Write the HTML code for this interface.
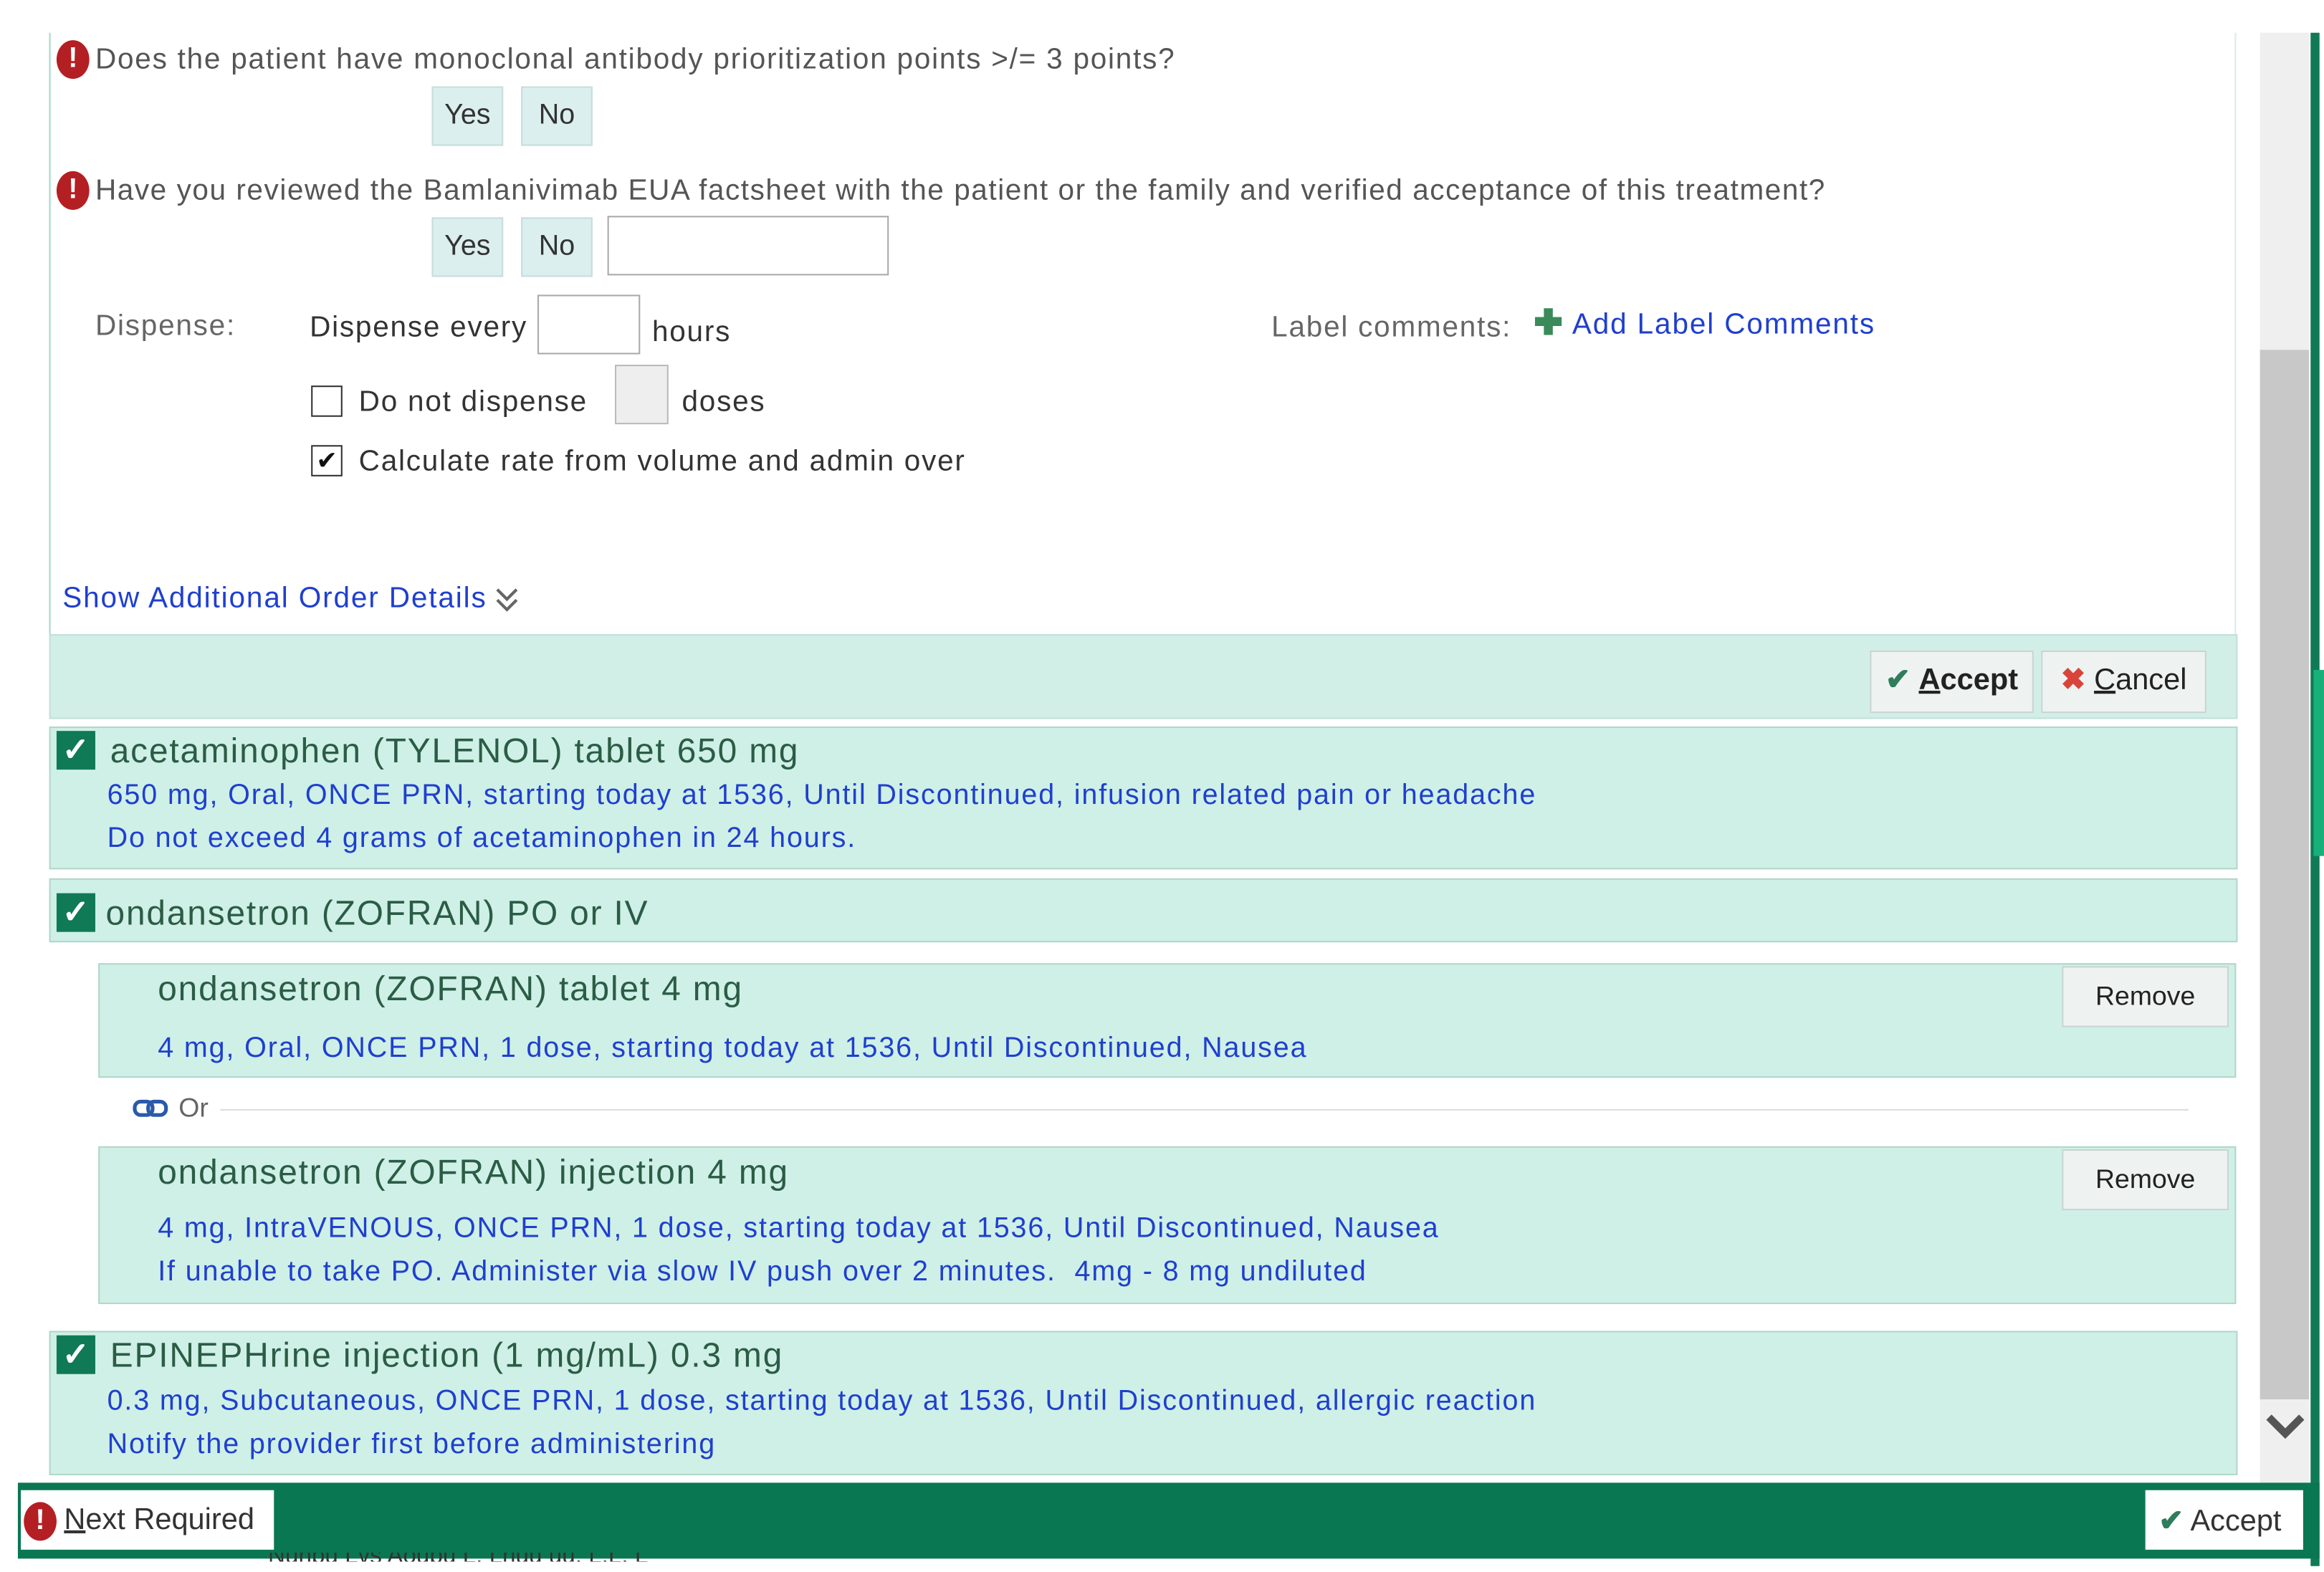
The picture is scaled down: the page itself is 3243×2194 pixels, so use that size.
<!DOCTYPE html>
<html><head><style>
html,body{margin:0;padding:0;background:#fff;overflow:hidden}
body{width:3243px;height:2194px;position:relative}
#w{position:absolute;left:0;top:0;width:1561px;height:1056px;transform:scale(2.0775,2.0777);transform-origin:0 0;font-family:"Liberation Sans",sans-serif;color:#444}
.a{position:absolute;white-space:nowrap}
.q{font-size:19.5px;color:#555;letter-spacing:0.85px}
.btn{position:absolute;background:#dcefef;border:1px solid #c8dcdc;font-size:19px;color:#333;text-align:center;line-height:38px}
.box{position:absolute;background:#cff0e6;border:1px solid #b3d6cb}
.t{font-size:23px;color:#2b5c46;letter-spacing:0.9px}
.b{font-size:19px;color:#1f3fd0;letter-spacing:0.9px}
.cb{position:absolute;width:26px;height:26px;background:#0f7a55;color:#fff;font-size:22px;line-height:26px;text-align:center;font-weight:bold}
.rm{position:absolute;background:#eef3f2;border:1px solid #c9d4d1;font-size:18px;color:#222;text-align:center;line-height:38px}
.err{position:absolute;width:22px;height:26px;border-radius:50%;background:#b41f24;color:#fff;font-weight:bold;font-size:19px;line-height:26px;text-align:center}
</style></head><body><div id="w">
<div class="a" style="left:33px;top:22px;width:1px;height:410px;background:#a8d8cc"></div>
<div class="a" style="left:1501px;top:22px;width:1px;height:410px;background:#d8ecea"></div>
<div class="err" style="left:38px;top:27px">!</div>
<div class="a q" style="left:64px;top:29px">Does the patient have monoclonal antibody prioritization points &gt;/= 3 points?</div>
<div class="btn" style="left:290px;top:58px;width:46px;height:38px">Yes</div>
<div class="btn" style="left:350px;top:58px;width:46px;height:38px">No</div>
<div class="err" style="left:38px;top:115px">!</div>
<div class="a q" style="left:64px;top:117px;letter-spacing:0.75px">Have you reviewed the Bamlanivimab EUA factsheet with the patient or the family and verified acceptance of this treatment?</div>
<div class="btn" style="left:290px;top:146px;width:46px;height:38px">Yes</div>
<div class="btn" style="left:350px;top:146px;width:46px;height:38px">No</div>
<div class="a" style="left:408px;top:145px;width:187px;height:38px;border:1px solid #aaa;background:#fff"></div>
<div class="a q" style="left:64px;top:208px;color:#666">Dispense:</div>
<div class="a q" style="left:208px;top:209px;color:#333">Dispense every</div>
<div class="a" style="left:361px;top:198px;width:67px;height:38px;border:1px solid #aaa;background:#fff"></div>
<div class="a q" style="left:438px;top:212px;color:#333">hours</div>
<div class="a" style="left:209px;top:259px;width:19px;height:19px;border:1px solid #333;background:#fff"></div>
<div class="a q" style="left:241px;top:259px;color:#333">Do not dispense</div>
<div class="a" style="left:413px;top:245px;width:34px;height:38px;border:1px solid #bbb;background:#eee"></div>
<div class="a q" style="left:458px;top:259px;color:#333">doses</div>
<div class="a" style="left:209px;top:299px;width:19px;height:19px;border:1px solid #333;background:#fff;font-size:17px;line-height:19px;text-align:center;color:#111">✔</div>
<div class="a q" style="left:241px;top:299px;color:#333">Calculate rate from volume and admin over</div>
<div class="a q" style="left:854px;top:209px;color:#666">Label comments:</div>
<svg class="a" style="left:1031px;top:207px" width="18" height="18" viewBox="0 0 18 18"><path d="M6 0h6v6h6v6h-6v6H6v-6H0V6h6z" fill="#3a8a5a"/></svg>
<div class="a b" style="left:1056px;top:207px;font-size:19.5px">Add Label Comments</div>
<div class="a b" style="left:42px;top:391px;font-size:19.5px">Show Additional Order Details</div>
<svg class="a" style="left:332px;top:394px" width="17" height="18" viewBox="0 0 17 18"><path d="M2 2l6.5 6.5L15 2M2 9l6.5 6.5L15 9" fill="none" stroke="#666" stroke-width="2"/></svg>
<div class="box" style="left:33px;top:426px;width:1468px;height:55px;background:#d2efe7;border-color:#c3e0d8"></div>
<div class="rm" style="left:1256px;top:437px;width:108px;height:40px;font-size:20px;color:#222"><span style="color:#2f7d5c;font-weight:bold">✔</span> <b><u>A</u>ccept</b></div>
<div class="rm" style="left:1371px;top:437px;width:109px;height:40px;font-size:20px;color:#222"><span style="color:#d9443a;font-weight:bold">✖</span> <u>C</u>ancel</div>
<div class="box" style="left:33px;top:488px;width:1468px;height:94px"></div>
<div class="cb" style="left:38px;top:491px">✓</div>
<div class="a t" style="left:74px;top:491px">acetaminophen (TYLENOL) tablet 650 mg</div>
<div class="a b" style="left:72px;top:524px">650 mg, Oral, ONCE PRN, starting today at 1536, Until Discontinued, infusion related pain or headache</div>
<div class="a b" style="left:72px;top:553px">Do not exceed 4 grams of acetaminophen in 24 hours.</div>
<div class="box" style="left:33px;top:590px;width:1468px;height:41px"></div>
<div class="cb" style="left:38px;top:600px">✓</div>
<div class="a t" style="left:71px;top:600px">ondansetron (ZOFRAN) PO or IV</div>
<div class="box" style="left:66px;top:647px;width:1434px;height:75px"></div>
<div class="a t" style="left:106px;top:651px">ondansetron (ZOFRAN) tablet 4 mg</div>
<div class="a b" style="left:106px;top:694px">4 mg, Oral, ONCE PRN, 1 dose, starting today at 1536, Until Discontinued, Nausea</div>
<div class="rm" style="left:1385px;top:649px;width:110px;height:39px">Remove</div>
<svg class="a" style="left:89px;top:738px" width="24" height="14" viewBox="0 0 24 14"><rect x="1.5" y="2" width="12" height="9" rx="4" fill="none" stroke="#2a5aa8" stroke-width="2.5"/><rect x="10.5" y="2" width="12" height="9" rx="4" fill="none" stroke="#2a5aa8" stroke-width="2.5"/></svg>
<div class="a" style="left:120px;top:734px;font-size:18px;color:#666">Or</div>
<div class="a" style="left:148px;top:745px;width:1322px;height:1px;background:#ddd"></div>
<div class="box" style="left:66px;top:770px;width:1434px;height:104px"></div>
<div class="a t" style="left:106px;top:774px">ondansetron (ZOFRAN) injection 4 mg</div>
<div class="a b" style="left:106px;top:815px">4 mg, IntraVENOUS, ONCE PRN, 1 dose, starting today at 1536, Until Discontinued, Nausea</div>
<div class="a b" style="left:106px;top:844px">If unable to take PO. Administer via slow IV push over 2 minutes.&nbsp; 4mg - 8 mg undiluted</div>
<div class="rm" style="left:1385px;top:772px;width:110px;height:39px">Remove</div>
<div class="box" style="left:33px;top:894px;width:1468px;height:95px"></div>
<div class="cb" style="left:38px;top:897px">✓</div>
<div class="a t" style="left:74px;top:897px">EPINEPHrine injection (1 mg/mL) 0.3 mg</div>
<div class="a b" style="left:72px;top:931px">0.3 mg, Subcutaneous, ONCE PRN, 1 dose, starting today at 1536, Until Discontinued, allergic reaction</div>
<div class="a b" style="left:72px;top:960px">Notify the provider first before administering</div>
<div class="a" style="left:1518px;top:22px;width:33px;height:975px;background:#efefef"></div>
<div class="a" style="left:1518px;top:235px;width:33px;height:705px;background:#c8c8c8"></div>
<svg class="a" style="left:1521px;top:948px" width="28" height="24" viewBox="0 0 28 24"><path d="M3 4l11 11L25 4" fill="none" stroke="#555" stroke-width="5"/></svg>
<div class="a" style="left:1552px;top:22px;width:6px;height:1030px;background:#0f7a55"></div>
<div class="a" style="left:1554px;top:450px;width:7px;height:125px;background:#17b07a"></div>
<div class="a" style="left:12px;top:996px;width:1546px;height:51px;background:#0a7753"></div>
<div class="a" style="left:14px;top:1001px;width:170px;height:40px;background:#fff"></div>
<div class="err" style="left:16px;top:1009px">!</div>
<div class="a" style="left:43px;top:1010px;font-size:20px;color:#333"><u>N</u>ext Required</div>
<div class="a" style="left:1441px;top:1001px;width:106px;height:40px;background:#fff"></div>
<div class="a" style="left:1450px;top:1009px;font-size:20px;color:#333"><span style="color:#2f7d5c;font-weight:bold">✔</span> Accept</div>
<div class="a" style="left:180px;top:1043px;width:360px;height:6px;overflow:hidden;font-size:16px;color:#333;line-height:6px">Nunbu Lvs Aoupu L. Lhuu uu. L.L. L</div>
</div></body></html>
